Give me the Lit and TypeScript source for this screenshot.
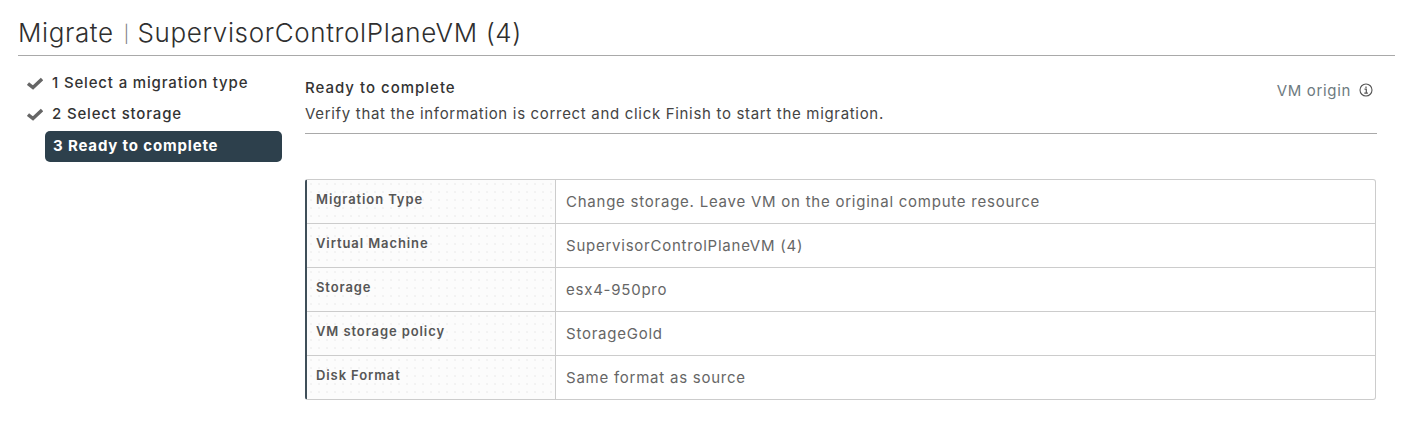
import { LitElement, html, css } from "lit";
import { customElement } from "lit/decorators.js";

const rows = [
  ["Migration Type", "Change storage. Leave VM on the original compute resource"],
  ["Virtual Machine", "SupervisorControlPlaneVM (4)"],
  ["Storage", "esx4-950pro"],
  ["VM storage policy", "StorageGold"],
  ["Disk Format", "Same format as source"],
];

const check = html`<svg class="check" viewBox="0 0 16 14" width="16" height="14"><path d="M1 7.5 L6 11.5 L15 3" fill="none" stroke="#666" stroke-width="3.4"/></svg>`;

@customElement("app-root")
export class AppRoot extends LitElement {
  static styles = css`
    :host { display: block; width: 1407px; height: 424px; background: #fff; font-family: Inter, "Noto Sans", sans-serif; color: #333; overflow: hidden; }
    .page { padding: 16px 12px 0 18px; }
    h1 { margin: 0; height: 39px; line-height: 34px; font-size: 26px; font-weight: 300; color: #2f2f2f; border-bottom: 1px solid #a9a9a9; letter-spacing: 0.62px; white-space: nowrap; }
    .pipe { font-size: 17px; color: #777; vertical-align: 2px; margin: 0 0 0 2px; }
    .body { display: grid; grid-template-columns: 264px 1072px; gap: 23px; padding-top: 11px; }
    .steps { display: flex; flex-direction: column; padding-left: 9px; }
    .step { display: flex; align-items: center; height: 31px; font-size: 15px; font-weight: 500; color: #333; gap: 9px; white-space: nowrap; letter-spacing: 0.84px; }
    .step.active { background: #2d404c; color: #fff; font-weight: 700; border-radius: 5px; margin: 2px 0 0 18px; width: 237px; padding: 0 0 2px 8px; box-sizing: border-box; }
    .check { flex: none; }
    .right { padding-top: 5px; }
    .head { display: flex; justify-content: space-between; height: 61px; border-bottom: 1px solid #a9a9a9; }
    .title { font-size: 15px; font-weight: 500; line-height: 24px; color: #333; padding-top: 4px; letter-spacing: 1px; }
    .sub { font-size: 15px; line-height: 26px; margin-top: 1px; color: #444; font-weight: 400; letter-spacing: 0.68px; }
    .origin { display: flex; align-items: flex-start; gap: 8px; font-size: 15px; color: #6d7a80; padding: 9px 4px 0 0; font-weight: 400; letter-spacing: 0.66px; }
    .origin svg { margin-top: 2px; }
    .table { margin-top: 45px; width: 1071px; box-sizing: border-box; border: 1px solid #ccc; border-left: 2px solid #3f4f59; border-radius: 3px; display: grid; grid-template-columns: 249px 1fr; }
    .k, .v { height: 44px; box-sizing: border-box; border-bottom: 1px solid #ccc; }
    .k:nth-last-child(2), .v:last-child { border-bottom: none; height: 43px; }
    .k { background-color: #fcfcfc; background-image: radial-gradient(#e8e8e8 0.6px, transparent 0.8px); background-size: 8px 8px; border-right: 1px solid #ccc; font-size: 13px; font-weight: 600; color: #565656; padding: 10px 0 0 9px; line-height: 18px; letter-spacing: 0.9px; }
    .v { font-size: 15px; color: #666; padding: 12px 0 0 10px; line-height: 20px; font-weight: 400; letter-spacing: 0.76px; }
  `;

  render() {
    return html`<div class="page">
      <h1>Migrate <span class="pipe">|</span> SupervisorControlPlaneVM (4)</h1>
      <div class="body">
        <div class="steps">
          <div class="step">${check}<span>1 Select a migration type</span></div>
          <div class="step">${check}<span>2 Select storage</span></div>
          <div class="step active">3 Ready to complete</div>
        </div>
        <div class="right">
          <div class="head">
            <div>
              <div class="title">Ready to complete</div>
              <div class="sub">Verify that the information is correct and click Finish to start the migration.</div>
            </div>
            <div class="origin">VM origin
              <svg width="14" height="14" viewBox="0 0 14 14"><circle cx="7" cy="7" r="6" fill="none" stroke="#555" stroke-width="1.1"/><path d="M5.5 6.2H7.3V10M5.3 10.2H8.9M7 3.4V5" fill="none" stroke="#555" stroke-width="1.2"/></svg>
            </div>
          </div>
          <div class="table">
            ${rows.map(([k, v]) => html`<div class="k">${k}</div><div class="v">${v}</div>`)}
          </div>
        </div>
      </div>
    </div>`;
  }
}
